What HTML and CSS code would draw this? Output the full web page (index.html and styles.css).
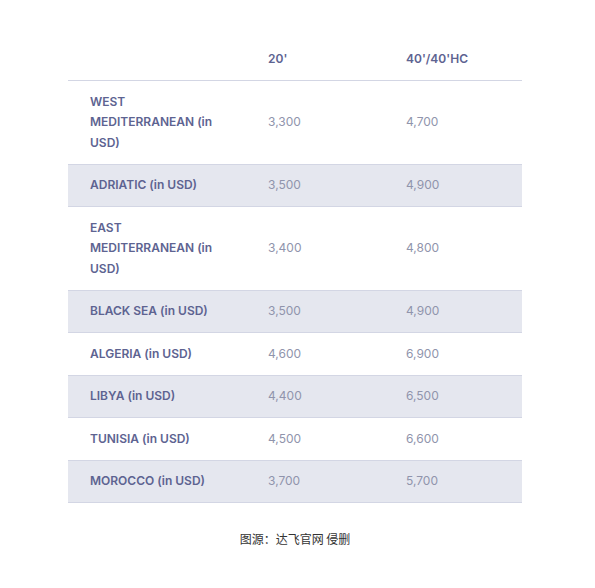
FILE: index.html
```html
<!DOCTYPE html>
<html>
<head>
<meta charset="utf-8">
<link rel="stylesheet" href="styles.css">
</head>
<body>
<div class="page">
  <table class="rates">
    <thead>
      <tr><th class="c1"></th><th class="c2">20'</th><th class="c3">40'/40'HC</th></tr>
    </thead>
    <tbody>
      <tr><td class="name">WEST<br>MEDITERRANEAN (in<br>USD)</td><td>3,300</td><td>4,700</td></tr>
      <tr class="alt"><td class="name">ADRIATIC (in USD)</td><td>3,500</td><td>4,900</td></tr>
      <tr><td class="name">EAST<br>MEDITERRANEAN (in<br>USD)</td><td>3,400</td><td>4,800</td></tr>
      <tr class="alt"><td class="name">BLACK SEA (in USD)</td><td>3,500</td><td>4,900</td></tr>
      <tr><td class="name">ALGERIA (in USD)</td><td>4,600</td><td>6,900</td></tr>
      <tr class="alt"><td class="name">LIBYA (in USD)</td><td>4,400</td><td>6,500</td></tr>
      <tr><td class="name">TUNISIA (in USD)</td><td>4,500</td><td>6,600</td></tr>
      <tr class="alt"><td class="name">MOROCCO (in USD)</td><td>3,700</td><td>5,700</td></tr>
    </tbody>
  </table>
  <p class="caption">图源：达飞官网 侵删</p>
</div>
</body>
</html>
```

FILE: styles.css
```css
html, body {
  margin: 0;
  background: #ffffff;
}
.page {
  padding: 38.5px 0 0 68px;
  width: 454px;
}
.rates {
  width: 454px;
  border-collapse: collapse;
  table-layout: fixed;
  font-family: Inter, "Noto Sans", sans-serif;
  font-size: 12px;
  line-height: 20.5px;
}
.rates th, .rates td {
  padding: 10.5px 0 10.5px 22px;
  text-align: left;
  vertical-align: middle;
  border-bottom: 1px solid #d3d6e4;
}
.rates th {
  font-weight: 600;
  color: #5d6391;
}
.c1 { width: 156px; }
.c2 { width: 116px; }
.c3 { width: 116px; }
.rates td {
  color: #9094ac;
  font-weight: 400;
}
.rates td.name {
  font-weight: 600;
  color: #5d6391;
}
.rates tr.alt td {
  background: #e5e7ef;
}
.caption {
  margin: 26px 0 0 0;
  text-align: center;
  font-family: "Noto Sans CJK SC", sans-serif;
  font-size: 12px;
  line-height: 20px;
  color: #333333;
}
```
